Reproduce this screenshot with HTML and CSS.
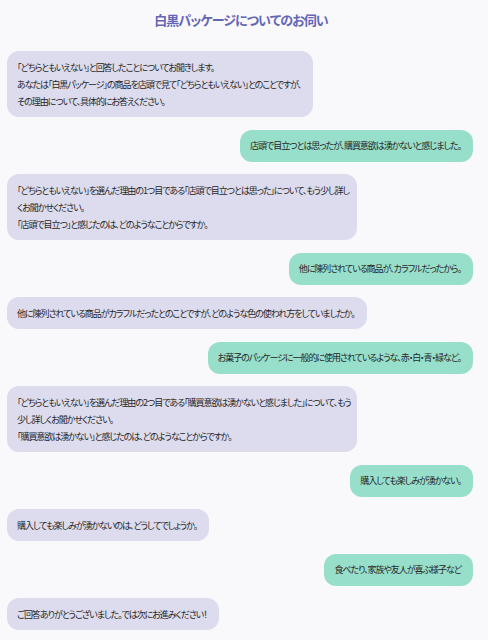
FILE: index.html
```html
<!DOCTYPE html>
<html lang="ja">
<head>
<meta charset="utf-8">
<link rel="stylesheet" href="styles.css">
</head>
<body>
<div class="page">
  <h1 class="title">白黒パッケージについてのお伺い</h1>
  <div class="chat">
    <div class="msg bot">「どちらともいえない」と回答したことについてお聞きします。<br>あなたは「白黒パッケージ」の商品を店頭で見て「どちらともいえない」とのことですが、<br>その理由について、具体的にお答えください。</div>
    <div class="msg user">店頭で目立つとは思ったが、購買意欲は湧かないと感じました。</div>
    <div class="msg bot wide">「どちらともいえない」を選んだ理由の1つ目である「店頭で目立つとは思った」について、もう少し詳し<br>くお聞かせください。<br>「店頭で目立つ」と感じたのは、どのようなことからですか。</div>
    <div class="msg user">他に陳列されている商品が、カラフルだったから。</div>
    <div class="msg bot">他に陳列されている商品がカラフルだったとのことですが、どのような色の使われ方をしていましたか。</div>
    <div class="msg user">お菓子のパッケージに一般的に使用されているような、赤・白・青・緑など。</div>
    <div class="msg bot wide">「どちらともいえない」を選んだ理由の2つ目である「購買意欲は湧かないと感じました」について、もう<br>少し詳しくお聞かせください。<br>「購買意欲は湧かない」と感じたのは、どのようなことからですか。</div>
    <div class="msg user">購入しても楽しみが湧かない。</div>
    <div class="msg bot">購入しても楽しみが湧かないのは、どうしてでしょうか。</div>
    <div class="msg user">食べたり、家族や友人が喜ぶ様子など</div>
    <div class="msg bot">ご回答ありがとうございました。では次にお進みください！</div>
  </div>
</div>
</body>
</html>
```
FILE: styles.css
```css
html, body {
  margin: 0;
  padding: 0;
  background: #f9f9fb;
}
body {
  font-family: "Noto Sans CJK JP", "Noto Sans", sans-serif;
  color: #262626;
}
.page {
  padding: 10px 15px 0 7px;
}
.title {
  margin: 0 0 21px 0;
  text-align: center;
  font-size: 13px;
  line-height: 20px;
  font-weight: bold;
  color: #6366b5;
  font-feature-settings: "palt";
  letter-spacing: -0.9px;
  padding-left: 2px;
}
.chat {
  display: flex;
  flex-direction: column;
  gap: 12.5px;
}
.msg {
  max-width: 340px;
  padding: 7.5px 12px 7.5px 10px;
  border-radius: 12px;
  font-size: 9px;
  line-height: 17px;
  letter-spacing: -1.05px;
  font-feature-settings: "palt";
}
.wide {
  width: 328px;
  white-space: nowrap;
}
.bot {
  align-self: flex-start;
  background: #dddcee;
}
.user {
  align-self: flex-end;
  background: #98dfcb;
}
```
